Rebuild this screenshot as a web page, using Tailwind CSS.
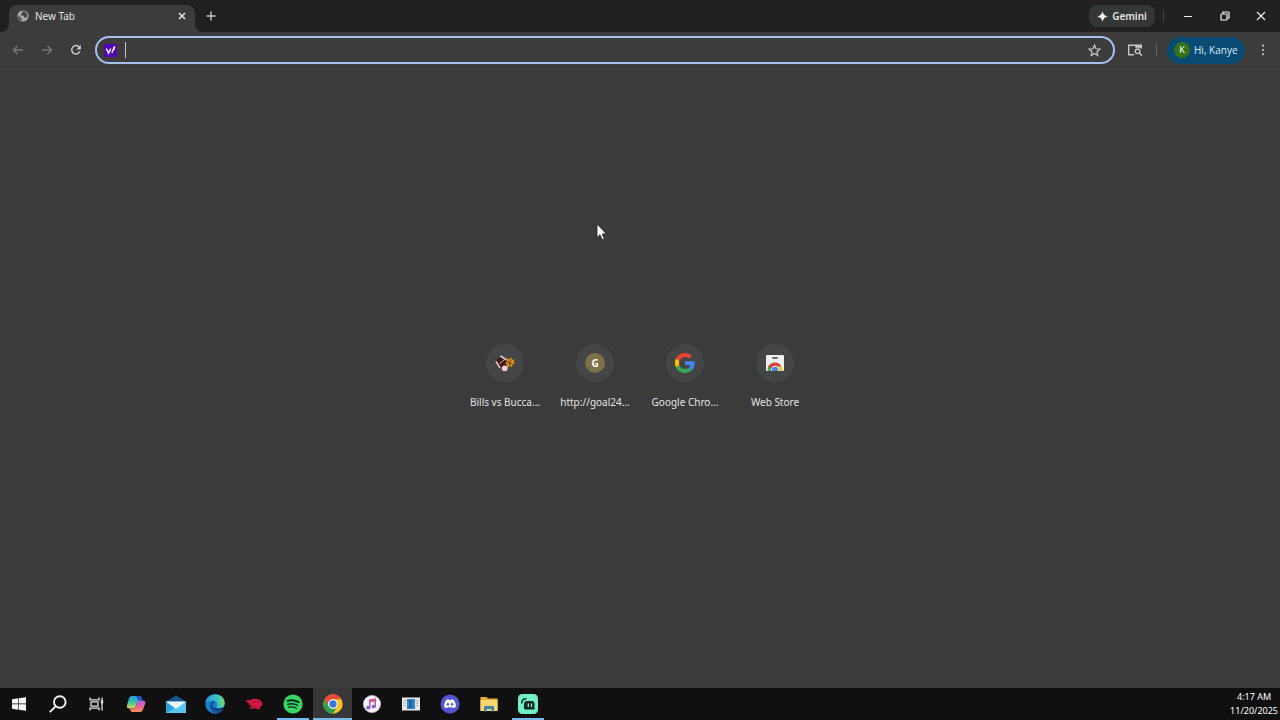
<!DOCTYPE html>
<html lang="en">
<head>
  <meta charset="UTF-8" />
  <title>New Tab</title>
  <meta name="viewport" content="width=device-width, initial-scale=1.0" />
  <script src="https://cdn.jsdelivr.net/npm/@tailwindcss/browser@4"></script>
</head>
<body class="h-screen flex flex-col overflow-hidden bg-[#3b3b3b] text-[#e3e3e3] text-[10px] leading-4 font-['Noto_Sans',sans-serif]">

  <!-- Tab strip -->
  <header class="h-8 shrink-0 flex items-center bg-[#1f201f]">
    <div class="relative self-end ml-[9px] w-[186px] h-[27px] px-2 pb-[5px] flex items-center bg-[#3c3c3c] rounded-t-lg">
      <svg class="absolute -left-2 bottom-0" width="8" height="8" viewBox="0 0 8 8"><path d="M8 0v8H0a8 8 0 0 0 8-8z" fill="#3c3c3c"/></svg>
      <svg class="absolute -right-2 bottom-0" width="8" height="8" viewBox="0 0 8 8"><path d="M0 0v8h8a8 8 0 0 1-8-8z" fill="#3c3c3c"/></svg>
      <svg width="12" height="12" viewBox="0 0 12 12">
        <circle cx="6" cy="6" r="5.6" fill="#a6a8aa"/>
        <path d="M6.2 1.2 5 2.3v1.2L3.8 4.2v1.3h2.4l.8 1v1h1.8l1.6-.6A4.8 4.8 0 0 0 6.2 1.2zM1.2 5.6l2.7 2.2v1h1v2A4.9 4.9 0 0 1 1.2 5.6z" fill="#454647"/>
      </svg>
      <span class="ml-1.5">New Tab</span>
      <button aria-label="Close tab" class="ml-auto">
        <svg width="10" height="10" viewBox="0 0 10 10" fill="none" stroke="#e3e3e3" stroke-width="1.5"><path d="M2 2l6 6M8 2l-6 6"/></svg>
      </button>
    </div>
    <button aria-label="New tab" class="ml-[10px]">
      <svg width="12" height="12" viewBox="0 0 12 12" fill="none" stroke="#c9c9c9" stroke-width="1.4"><path d="M6 1.5v9M1.5 6h9"/></svg>
    </button>
    <button class="ml-auto h-[22px] w-[66px] flex items-center justify-center gap-1 rounded-lg bg-[#353636] font-semibold">
      <svg width="11" height="11" viewBox="0 0 12 12" fill="#f1f1f1"><path d="M6 0.4C6.7 3.6 8.4 5.3 11.6 6 8.4 6.7 6.7 8.4 6 11.6 5.3 8.4 3.6 6.7.4 6 3.6 5.3 5.3 3.6 6 .4z"/></svg>
      Gemini
    </button>
    <span class="ml-2 h-3 w-px bg-[#444]"></span>
    <div class="flex ml-1">
      <button aria-label="Minimize" class="w-10 flex justify-center"><svg width="10" height="10" viewBox="0 0 10 10"><path d="M1 5.5h8" stroke="#f1f1f1"/></svg></button>
      <button aria-label="Restore" class="w-[34px] flex justify-center"><svg width="10" height="10" viewBox="0 0 10 10" fill="none" stroke="#f1f1f1"><rect x="1" y="3" width="6" height="6" rx=".6" stroke-width="1.2"/><path d="M3 2.8V1h5.2q.8 0 .8.8V7H7.2" stroke-width="1.2"/></svg></button>
      <button aria-label="Close" class="w-[38px] flex justify-center"><svg width="10" height="10" viewBox="0 0 10 10"><path d="M1 1l8 8M9 1l-8 8" stroke="#f1f1f1" stroke-width="1.1"/></svg></button>
    </div>
  </header>

  <!-- Toolbar -->
  <nav class="h-[38px] shrink-0 flex items-center bg-[#3c3c3c] border-b border-[#434343] pl-3 pr-[14px] pb-px">
    <div class="flex gap-[17px] w-[83px]">
      <button aria-label="Back"><svg width="12" height="12" viewBox="0 0 12 12" fill="none" stroke="#777" stroke-width="1.3"><path d="M11 6H1.6M5.6 1.8 1.4 6l4.2 4.2"/></svg></button>
      <button aria-label="Forward"><svg width="12" height="12" viewBox="0 0 12 12" fill="none" stroke="#777" stroke-width="1.3"><path d="M1 6h9.4M6.4 1.8 10.6 6l-4.2 4.2"/></svg></button>
      <button aria-label="Reload"><svg width="12" height="12" viewBox="0 0 12 12" fill="none" stroke="#c7c7c7" stroke-width="1.5"><path d="M9.9 7.2A4.2 4.2 0 1 1 9.4 3.4"/><path d="M10.9 1v4.6H6.3z" fill="#c7c7c7" stroke="none"/></svg></button>
    </div>
    <div class="flex-1 h-7 flex items-center rounded-full border-2 border-[#a8bff0] pl-[7px] pr-3">
      <svg width="13" height="13" viewBox="0 0 13 13">
        <rect width="13" height="13" rx="1" fill="#5205b5"/>
        <path d="M2.2 4.6 4.3 8.3M6.8 4.6 4 10.3" fill="none" stroke="#fff" stroke-width="1.4"/>
        <path d="M9.6 2.6h2L9.9 6.9H8z" fill="#fff"/><circle cx="8.2" cy="8.2" r=".9" fill="#fff"/>
      </svg>
      <span class="ml-2 h-4 w-px bg-[#c4c4c4]"></span>
      <input type="text" aria-label="Address and search bar" class="flex-1 min-w-0 bg-transparent outline-none" />
      <button aria-label="Bookmark this tab"><svg width="13" height="13" viewBox="0 0 13 13"><path d="M6.5 1.2 8 4.8l3.9.3-3 2.6.9 3.8-3.3-2-3.3 2 .9-3.8-3-2.6L5 4.8z" fill="none" stroke="#c9c9c9" stroke-width="1.2"/></svg></button>
    </div>
    <button aria-label="Side panel search" class="ml-3">
      <svg width="16" height="14" viewBox="0 0 16 14" fill="none" stroke="#c7c7c7" stroke-width="1.4"><path d="M7 11.7H1.7V2.3h12.6v3.2"/><path d="M8.3 2.2h6v2.6h-6z" fill="#c7c7c7" stroke="none"/><circle cx="10.6" cy="8.3" r="2.3"/><path d="m12.3 10 2.7 2.8"/></svg>
    </button>
    <span class="ml-[13px] h-3 w-px bg-[#626466]"></span>
    <button class="ml-[10px] h-[27px] w-[78px] flex items-center gap-1 pl-[7px] rounded-full bg-[#094b73] text-[#d6eafc] whitespace-nowrap">
      <span class="size-4 flex items-center justify-center rounded-full bg-[#35721b] text-[9px] text-white">K</span>
      <span class="font-['Open_Sans',sans-serif]">Hi, Kanye</span>
    </button>
    <button aria-label="Menu" class="ml-[15px]"><svg width="6" height="12" viewBox="0 0 6 12" fill="#c7c7c7"><circle cx="3" cy="1.7" r="1.1"/><circle cx="3" cy="6" r="1.1"/><circle cx="3" cy="10.3" r="1.1"/></svg></button>
  </nav>

  <!-- Shortcuts -->
  <main class="flex-1 min-h-0 pt-[274px]">
    <div class="flex justify-center text-[#e3e3e3]">
      <a href="#" class="w-[90px] flex flex-col items-center gap-3">
        <span class="size-[38px] rounded-full bg-[#444646] flex items-center justify-center">
          <svg width="20" height="18" viewBox="0 0 20 18">
            <path d="M1.5 6.5Q4 2 10 3.5L12 9Q9.500 14 5 14L2 11.500z" fill="#431a18"/>
            <path d="M.3 7.8 1.600 7l4.200 6.500-1.500.7zM4.800 2.600l1.200-1.300 6 4-1 1.500z" fill="#dfcdca"/>
            <path d="m4.500 9.500 4.500-3.500" stroke="#e7d3cf" stroke-width=".8"/>
            <path d="m12.500 3.500 1.300 1.700 2.700-1.700.5 2.200 2.500-.2-.7 2.500 1 2-2.400.6-.2 2.200-2.400-.6-2.600 1.500-.2-3-1.700-1.500 1.500-1.700z" fill="#e28d17"/>
            <path d="m12 7.500 5.500 2.700M16 5.500q-2 3-1.300 6" fill="none" stroke="#54351a" stroke-width=".9"/>
            <circle cx="9.700" cy="14.300" r="2.900" fill="#f2cfc8"/>
          </svg>
        </span>
        <span>Bills vs Bucca...</span>
      </a>
      <a href="#" class="w-[90px] flex flex-col items-center gap-3">
        <span class="size-[38px] rounded-full bg-[#444646] flex items-center justify-center">
          <span class="size-5 rounded-full bg-[#7d7048] flex items-center justify-center font-bold text-white">G</span>
        </span>
        <span>http://goal24...</span>
      </a>
      <a href="#" class="w-[90px] flex flex-col items-center gap-3">
        <span class="size-[38px] rounded-full bg-[#444646] flex items-center justify-center">
          <svg width="20" height="20" viewBox="0 0 48 48">
            <path fill="#EA4335" d="M24 9.5c3.5 0 6.7 1.2 9.2 3.6l6.9-6.9C35.9 2.4 30.5 0 24 0 14.6 0 6.5 5.4 2.6 13.2l8 6.2C12.4 13.7 17.7 9.5 24 9.5z"/>
            <path fill="#4285F4" d="M47 24.5c0-1.6-.2-3.1-.4-4.5H24v9h12.9c-.6 3-2.3 5.5-4.8 7.2l7.7 6C44.4 38 47 32 47 24.5z"/>
            <path fill="#FBBC05" d="M10.5 28.6a14.5 14.5 0 0 1 0-9.2l-8-6.2a24 24 0 0 0 0 21.6z"/>
            <path fill="#34A853" d="M24 48c6.5 0 11.9-2.1 15.9-5.8l-7.7-6c-2.2 1.5-4.9 2.3-8.2 2.3-6.3 0-11.6-4.2-13.5-9.900l-8 6.200C6.500 42.600 14.600 48 24 48z"/>
          </svg>
        </span>
        <span>Google Chro...</span>
      </a>
      <a href="#" class="w-[90px] flex flex-col items-center gap-3">
        <span class="size-[38px] rounded-full bg-[#444646] flex items-center justify-center">
          <svg width="18" height="16" viewBox="0 0 18 16">
            <rect width="18" height="16" rx="1" fill="#eeefef"/>
            <rect x="6" y="2" width="6" height="2" rx="1" fill="#686b6f"/>
            <path d="M1.8 16a7.2 7.2 0 0 1 1-6l4.6 6z" fill="#40a852"/>
            <path d="M16.3 16a7.5 7.5 0 0 0-1-4.5H9l2 4.5z" fill="#f6c431"/>
            <path d="M2.6 11a7.3 7.3 0 0 1 12.8.5H9L5.8 15z" fill="#de4136"/>
            <path d="M5.3 16a3.9 3.9 0 1 1 7.4 0z" fill="#fff"/><path d="M6 16a3.200 3.200 0 1 1 6 0z" fill="#4285e8"/>
          </svg>
        </span>
        <span>Web Store</span>
      </a>
    </div>
  </main>

  <!-- Mouse pointer -->
  <svg class="absolute left-[596px] top-[223px]" width="11" height="18" viewBox="0 0 11 18"><path d="M1 1v13.5l3-2.8 2.1 4.9 2.2-.9-2.1-4.8h4.1z" fill="#fff" stroke="#222" stroke-width=".8"/></svg>

  <!-- Taskbar -->
  <footer class="h-8 shrink-0 flex bg-[#101010]">
    <button aria-label="Start" class="w-[38px] flex items-center justify-center">
      <svg width="14" height="14" viewBox="0 0 14 14" fill="#f4f4f4"><path d="M0 2.2 6 1.3v5.3H0zM6.6 1.2 14 .2v6.4H6.6zM0 7.3h6v5.4l-6-.9zM6.6 7.3H14v6.5l-7.4-1.1z"/></svg>
    </button>
    <button aria-label="Search" class="w-[39px] flex items-center justify-center">
      <svg width="18" height="18" viewBox="0 0 18 18" fill="none" stroke="#f4f4f4" stroke-width="1.9"><circle cx="10.8" cy="7" r="5.8"/><path d="M6.6 11.3.8 17.2"/></svg>
    </button>
    <button aria-label="Task view" class="w-[39px] flex items-center justify-center">
      <svg width="15" height="14" viewBox="0 0 15 14" fill="none" stroke="#e4e4e4" stroke-width="1.3"><path d="M1 .5v2.3h9V.5M1 13.5v-2.3h9v2.3M2 4.800h7v4.400H2zM13 .5v13"/><path d="M11.8 3.5h2.4v2.8h-2.4z" fill="#e4e4e4" stroke="none"/></svg>
    </button>
    <button aria-label="Copilot" class="w-10 flex items-center justify-center">
      <svg width="20" height="18" viewBox="0 0 20 18">
        <defs>
          <linearGradient id="cpA" x1="0" y1="0" x2="0" y2="1"><stop stop-color="#269de9"/><stop offset=".5" stop-color="#3cc3a2"/><stop offset="1" stop-color="#d8d947"/></linearGradient>
          <linearGradient id="cpB" x1="0" y1="0" x2="0" y2="1"><stop stop-color="#a968ec"/><stop offset=".5" stop-color="#eb5e9e"/><stop offset="1" stop-color="#f69250"/></linearGradient>
        </defs>
        <path d="M6 1h7.5q1.5 0 2 1.5l.9 3h-3q-1.6 0-2.1 1.6L9.5 12q-.5 1.5-2 1.5H3.2Q.3 13.5 1 10.2L3 3.3Q3.7 1 6 1z" fill="url(#cpA)"/>
        <path d="M14 17H6.5q-1.5 0-2-1.5l-.7-2h3.7q1.5 0 2-1.5l1.8-4.9q.5-1.6 2.1-1.6h3.5q3 0 2.3 3.3L17 14.7Q16.3 17 14 17z" fill="url(#cpB)"/>
        <path d="M10 1h3.5q1.5 0 2 1.5l.9 3h-3q-1.5 0-1.9-1.5z" fill="#2253c9"/>
      </svg>
    </button>
    <button aria-label="Mail" class="w-[39px] flex items-center justify-center">
      <svg width="20" height="19" viewBox="0 0 20 19"><path d="M0 6.5 10 .5l10 6V12H0z" fill="#15568d"/><path d="M0 6.5h20V18H0z" fill="#2c9edb"/><path d="M0 18 20 6.8V18z" fill="#55c5f1"/><path d="M0 6.5h20l-8.2 6.2q-1.8 1.2-3.6 0z" fill="#eaf5fb"/></svg>
    </button>
    <button aria-label="Microsoft Edge" class="w-[39px] flex items-center justify-center">
      <svg width="20" height="20" viewBox="0 0 20 20">
        <defs><linearGradient id="edgeA" x1="0" y1="0" x2="1" y2="0"><stop stop-color="#2295db"/><stop offset=".6" stop-color="#39bfc9"/><stop offset="1" stop-color="#78dc66"/></linearGradient></defs>
        <circle cx="10" cy="10" r="9.7" fill="#1780cd"/>
        <path d="M.3 9C1 3.8 5 .3 10 .3c5.7 0 9.7 4 9.7 8.5 0 3.2-2.4 5-5.2 5-2.3 0-3.5-.8-2.8-1.8 1.7-2.5-.4-5.6-4-5.6C4.5 6.4 1.5 7.6.3 9z" fill="url(#edgeA)"/>
        <path d="M7.3 7.5c-2.7 2-3 6.2-.7 9 1.2 1.5 2.5 2.5 4.5 3.1 3-.2 5.8-1.9 7.2-4.5-5 2.4-10.4.4-10.7-3.6-.1-1.7.7-2.9 2.3-3.6-.8-.5-1.7-.6-2.6-.4z" fill="#17509b"/>
        <path d="M11.7 12c1.4-2.2.1-4.1-1.8-4.1-2.8 1.6-2.9 4.6-.4 6.1 2.6 1.5 6.2 1.3 8.8-.4l.5.5-.5 1C14.8 17 8 16 7.6 11.5c-.1-1.7.7-2.9 2.3-3.6 1.9 0 3.2 1.9 1.8 4.1z" fill="#101c2a"/>
      </svg>
    </button>
    <button aria-label="Red fish" class="w-[39px] flex items-center justify-center">
      <svg width="18" height="14" viewBox="0 0 18 14" fill="#d71743"><path d="M.5 3 5 3.2Q8 1.3 12 2q4.5.8 5.5 5-.4 2.2-2.3 2.8l-.2 1.7-2 .8-3.2-1-3.7.4-1.7-1.3 2.6-.6L4.5 8.6l1.8-.8-3-.3 1-1.3L.5 5l2-.6z"/><path d="m6.3 4.8 6-.2 2.5 2M7.5 9.2l5 .4" fill="none" stroke="#7b1730" stroke-width=".7"/></svg>
    </button>
    <button aria-label="Spotify" class="w-10 px-1 flex flex-col items-center">
      <span class="flex-1 flex items-center"><svg width="20" height="20" viewBox="0 0 20 20"><circle cx="10" cy="10" r="9.6" fill="#36d765"/><g fill="none" stroke="#10251a" stroke-linecap="round"><path d="M4.3 6.9q6-1.7 11.4 1.2" stroke-width="1.8"/><path d="M4.9 10.2q5.2-1.3 9.7 1.1" stroke-width="1.5"/><path d="M5.4 13.2q4.4-1 8 1" stroke-width="1.2"/></g></svg></span>
      <span class="-mt-0.5 h-0.5 w-8 bg-[#76b9ed]"></span>
    </button>
    <button aria-label="Google Chrome" class="w-[39px] flex flex-col items-center">
      <span class="flex-1 w-full bg-[#373737] flex items-center justify-center"><svg width="20" height="20" viewBox="0 0 20 20">
        <circle cx="10" cy="10" r="9.7" fill="#fbc11f"/>
        <path d="M1.6 5.2A9.7 9.7 0 0 1 18.4 5.2H10A4.8 4.8 0 0 0 5.8 12.4z" fill="#e8483a"/>
        <path d="M1.6 5.2 5.8 12.4A4.8 4.8 0 0 0 14.2 12.4L10 19.7A9.7 9.7 0 0 1 1.6 5.2z" fill="#2da14e"/>
        <circle cx="10" cy="10" r="4.8" fill="#fff"/><circle cx="10" cy="10" r="3.7" fill="#3979df"/>
      </svg></span>
      <span class="-mt-0.5 h-0.5 w-full bg-[#76b9ed]"></span>
    </button>
    <button aria-label="iTunes" class="w-[39px] flex items-center justify-center">
      <svg width="18" height="18" viewBox="0 0 18 18"><defs><linearGradient id="music" x1="0" y1="0" x2="0" y2="1"><stop stop-color="#e94f91"/><stop offset="1" stop-color="#6870d7"/></linearGradient></defs><circle cx="9" cy="9" r="8.6" fill="#f7f1fa" stroke="#ddbfe2" stroke-width=".7"/><path d="M6 4.6 13 3.2v8.3a2.2 1.8 0 1 1-1.5-1.7V6.4L7.5 7.3v5.4A2.2 1.8 0 1 1 6 11z" fill="url(#music)"/></svg>
    </button>
    <button aria-label="News" class="w-[39px] flex items-center justify-center">
      <svg width="18" height="14" viewBox="0 0 18 14"><path d="M0 .5h18v13H0z" fill="#e8eaec"/><path d="M5 2h8v10H5z" fill="#2d83c9"/><path d="M7 3h3v8H7z" fill="#1c66a8"/><path d="M1.5 3.5h2.5M1.5 6h2.5M1.5 8.5h2.5M14 3.5h2.5M14 6h2.5M14 8.5h2.5" stroke="#a0aab1"/></svg>
    </button>
    <button aria-label="Discord" class="w-[39px] flex items-center justify-center">
      <svg width="20" height="20" viewBox="0 0 20 20"><circle cx="10" cy="10" r="9.5" fill="#5553d0"/><path d="M5.9 6.3q1.3-.8 2.6-1l.4.8h2.2l.4-.8q1.3.2 2.6 1 2 3.2 1.7 6.6-1.2 1-2.9 1.4l-.7-1.2q-2.2.6-4.4 0l-.7 1.2q-1.7-.4-2.9-1.4-.3-3.4 1.7-6.6z" fill="#fff"/><ellipse cx="7.9" cy="10.3" rx="1.2" ry="1.4" fill="#5553d0"/><ellipse cx="12.1" cy="10.3" rx="1.2" ry="1.4" fill="#5553d0"/></svg>
    </button>
    <button aria-label="File Explorer" class="w-[39px] flex items-center justify-center">
      <svg width="18" height="16" viewBox="0 0 18 16"><path d="M.5 1h6l1.6 1.5h9.4V15H.5z" fill="#e9ad35"/><path d="M.5 4h17v11H.5z" fill="#fbd66f"/><path d="M4 15.5V11q0-1 1-1h8q1 0 1 1v4.5h-2.5v-2.5h-5v2.5z" fill="#3e83a8"/></svg>
    </button>
    <button aria-label="Streamlabs" class="w-10 px-1 flex flex-col items-center">
      <span class="flex-1 flex items-center"><svg width="20" height="20" viewBox="0 0 20 20"><rect width="20" height="20" rx="4.5" fill="#73f0c4"/><path d="M3.7 9Q3.8 4.9 8 4.8" fill="none" stroke="#13382e" stroke-width="1.5" stroke-linecap="round"/><path d="M6 10q0-3 3-3h4.5q3 0 3 3v5.5H7.5Q6 15.5 6 14z" fill="#102b24"/><path d="M10.3 10v2.5M13.5 10v2.5" stroke="#73f0c4" stroke-width="1.3" stroke-linecap="round"/></svg></span>
      <span class="-mt-0.5 h-0.5 w-8 bg-[#76b9ed]"></span>
    </button>
    <time class="ml-auto pr-0.5 pb-px flex flex-col items-center justify-center text-[9px] leading-[14px] text-white" datetime="2025-11-20T04:17">
      <span>4:17 AM</span>
      <span>11/20/2025</span>
    </time>
  </footer>
</body>
</html>
